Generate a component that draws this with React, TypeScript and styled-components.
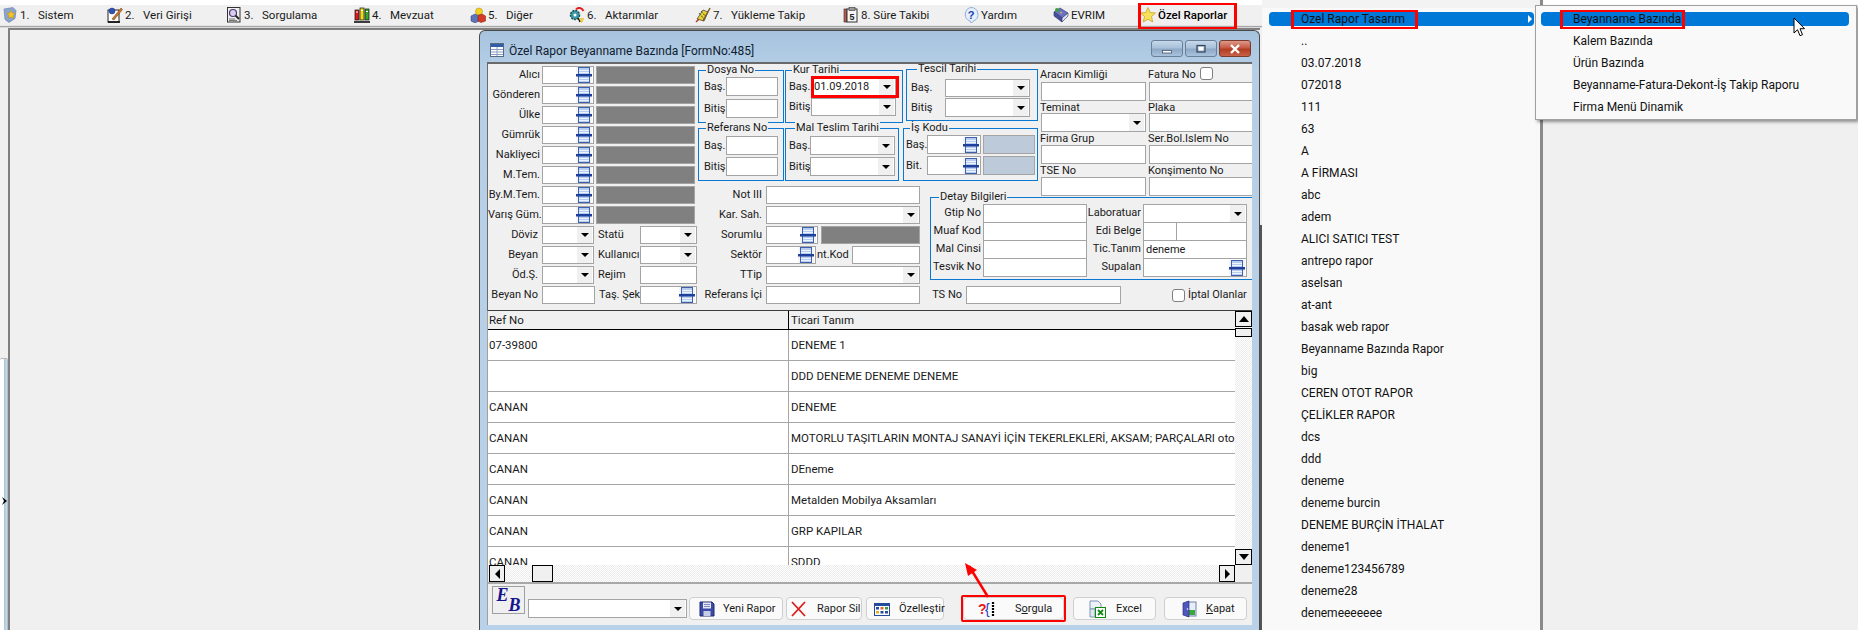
import React from 'react';
import styled, { createGlobalStyle } from 'styled-components';

const UI_FONT = 'Roboto, "Liberation Sans", Arial, sans-serif';

const GlobalStyle = createGlobalStyle`
  html, body {
    margin: 0;
    padding: 0;
    background: #f0f0f0;
  }
  *, *::before, *::after {
    box-sizing: border-box;
  }
`;

const Page = styled.div`
  position: relative;
  width: 1858px;
  height: 630px;
  display: flex;
  overflow: hidden;
  background: #f0f0f0;
  color: #1a1a1a;
  font: 12px/14px ${UI_FONT};
`;

/* ---------- main program side ---------- */

const MainSide = styled.div`
  width: 1262px;
  display: flex;
  flex-direction: column;
`;

const TopGap = styled.div`
  height: 5px;
  background: #fff;
`;

const MenuBar = styled.nav`
  height: 21px;
  padding-left: 2px;
  display: flex;
  align-items: center;
  background: #f0f0f0;
  border-bottom: 1px solid #e4e4e4;
  font-size: 11.5px;
`;

const MenuItem = styled.div<{ $w: number; $marked?: boolean }>`
  position: relative;
  width: ${(p) => p.$w}px;
  display: flex;
  align-items: center;
  flex: none;
  white-space: nowrap;
  ${(p) => p.$marked && `
    color: #000;
    font-weight: 500;
    &::after {
      content: '';
      position: absolute;
      left: -2px;
      top: -4px;
      width: 99px;
      height: 26px;
      border-style: solid;
      border-color: #f00;
      border-width: 2px 3px;
    }
  `}
`;

const MenuIcon = styled.svg`
  width: 16px;
  height: 16px;
  flex: none;
  margin-right: 2px;
`;

const MenuNumber = styled.span`
  width: 18px;
  flex: none;
`;

const MenuRule = styled.div`
  height: 2px;
  background: #a8a8a8;
  border-bottom: 1px solid #d8d8d8;
`;

const Workspace = styled.div`
  flex: 1;
  display: flex;
  min-height: 0;
`;

const LeftRail = styled.div`
  width: 8px;
  flex: none;
  display: flex;
  flex-direction: column;
  padding-top: 330px;
`;

const RailTab = styled.div`
  flex: 1;
  padding: 138px 0 0 2px;
  border-radius: 2px 2px 0 0;
  border-top: 1px solid #b8b8b8;
  background: linear-gradient(90deg, #fff 0 45%, #a9c7d9 55%, #c8dbe6 80%, #9fb4c0 100%);
`;

const RailChevron = styled.svg`
  display: block;
  width: 5px;
  height: 8px;
`;

const MdiArea = styled.div`
  flex: 1;
  padding-left: 469px;
  border-left: 2px solid #808080;
  border-top: 2px solid #808080;
`;

const MdiEdge = styled.div`
  width: 2px;
  flex: none;
  margin-top: 197px;
  background: #555;
`;

/* ---------- report window ---------- */

const Window = styled.section`
  width: 781px;
  height: 600px;
  padding: 0 7px 5px;
  display: flex;
  flex-direction: column;
  border: 1px solid #4a4a4a;
  border-bottom: 0;
  border-radius: 6px 6px 0 0;
  background: linear-gradient(180deg, #a6c3de 0, #b6cfe7 40px, #b9d1e9 100%);
`;

const TitleBar = styled.header`
  height: 31px;
  flex: none;
  display: flex;
  align-items: flex-end;
  padding: 0 1px 4px 3px;
  color: #10202e;
`;

const TitleIcon = styled.svg`
  width: 14px;
  height: 14px;
  flex: none;
  margin: 0 5px 1px 0;
`;

const TitleText = styled.span`
  flex: 1;
`;

const WindowButtons = styled.div`
  display: flex;
  gap: 2px;
  margin-bottom: 1px;
`;

const WindowButton = styled.div<{ $close?: boolean }>`
  width: 32px;
  height: 17px;
  display: flex;
  align-items: center;
  justify-content: center;
  border: 1px solid ${(p) => (p.$close ? '#7a3a2c' : '#6b7f96')};
  border-radius: 3px;
  background: ${(p) => (p.$close
    ? 'linear-gradient(180deg, #dd9a8b 0, #c75a44 45%, #b23c22 55%, #c9614a 100%)'
    : 'linear-gradient(180deg, #c6d8ea 0, #a9c1da 45%, #8ea9c6 55%, #a9c2dc 100%)')};
`;

const ButtonGlyph = styled.svg`
  width: 12px;
  height: 10px;
`;

const FormBody = styled.div`
  height: 248px;
  flex: none;
  padding-top: 1px;
  display: flex;
  overflow: hidden;
  background: #f0f0f0;
  border-top: 2px solid #6a6a6a;
  border-left: 1px solid #6a6a6a;
  font-size: 11px;
`;

const PartyColumn = styled.div`
  width: 210px;
  flex: none;
  padding-top: 1px;
  display: flex;
  flex-direction: column;
  gap: 2px;
`;

const FormRow = styled.div`
  height: 18px;
  display: flex;
  gap: 2px;
`;

const FieldLabel = styled.span<{ $w: number; $left?: boolean; $pad?: number }>`
  width: ${(p) => p.$w}px;
  flex: none;
  white-space: nowrap;
  line-height: 18px;
  text-align: ${(p) => (p.$left ? 'left' : 'right')};
  padding-${(p) => (p.$left ? 'left' : 'right')}: ${(p) => p.$pad ?? 0}px;
`;

const Field = styled.div<{ $w: number; $h?: number; $marked?: boolean; $ml?: number }>`
  position: relative;
  width: ${(p) => p.$w}px;
  height: ${(p) => p.$h ?? 18}px;
  flex: none;
  margin-left: ${(p) => p.$ml ?? 0}px;
  padding-left: 2px;
  display: flex;
  align-items: center;
  background: #fff;
  border: 1px solid #a4a4a4;
  white-space: nowrap;
  ${(p) => p.$marked && `
    &::after {
      content: '';
      position: absolute;
      left: -1px;
      right: -4px;
      top: -3px;
      bottom: -3px;
      border: 3px solid #f00;
    }
  `}
`;

const FieldValue = styled.span`
  flex: 1;
  overflow: hidden;
`;

const DropButton = styled.span`
  width: 15px;
  height: 100%;
  flex: none;
  display: flex;
  align-items: center;
  justify-content: center;
  background: #f0f0f0;
  margin-right: 1px;
  &::before {
    content: '';
    border-left: 4px solid transparent;
    border-right: 4px solid transparent;
    border-top: 4px solid #000;
  }
`;

const LookupGlyph = styled.svg`
  width: 16px;
  height: 16px;
  flex: none;
  margin-right: 1px;
  background: #f4f4f4;
`;

const GrayBox = styled.div<{ $w: number; $h?: number; $tint?: boolean; $ml?: number }>`
  width: ${(p) => p.$w}px;
  height: ${(p) => p.$h ?? 18}px;
  flex: none;
  margin-left: ${(p) => p.$ml ?? 0}px;
  background: ${(p) => (p.$tint ? '#bccad9' : '#808080')};
  border: 1px solid #a4a4a4;
`;

const RightRegion = styled.div`
  flex: 1;
  display: grid;
  grid-template-columns: 222px 10px 110px 212px;
  grid-template-rows: 121px 11px 108px;
`;

const GroupsArea = styled.div`
  grid-column: 1 / 4;
  grid-row: 1;
  padding-top: 5px;
  display: flex;
`;

const GroupColumn = styled.div<{ $w: number; $end?: boolean; $top?: number; $gap: number }>`
  width: ${(p) => p.$w}px;
  flex: none;
  display: flex;
  flex-direction: column;
  align-items: ${(p) => (p.$end ? 'flex-end' : 'flex-start')};
  gap: ${(p) => p.$gap}px;
  margin-top: ${(p) => p.$top ?? 0}px;
`;

const FieldGroup = styled.fieldset<{ $w: number; $h: number; $pl: number; $pt: number; $gap: number }>`
  position: relative;
  width: ${(p) => p.$w}px;
  height: ${(p) => p.$h}px;
  margin: 0;
  padding: ${(p) => p.$pt}px 0 0 ${(p) => p.$pl}px;
  min-width: 0;
  display: flex;
  flex-direction: column;
  gap: ${(p) => p.$gap}px;
  border: 1px solid #0a78d0;
`;

const GroupTitle = styled.span<{ $x: number }>`
  position: absolute;
  left: ${(p) => p.$x}px;
  top: -8px;
  padding: 0 1px;
  background: #f0f0f0;
  white-space: nowrap;
`;

const GroupRow = styled.div`
  display: flex;
  align-items: center;
`;

const GroupLabel = styled.span<{ $w: number }>`
  width: ${(p) => p.$w}px;
  flex: none;
`;

const VehicleGrid = styled.div`
  grid-column: 4;
  grid-row: 1 / 3;
  display: grid;
  grid-template-columns: 108px 104px;
  align-content: start;
`;

const VehicleCell = styled.div`
  display: flex;
  flex-direction: column;
`;

const VehicleLabel = styled.div<{ $h: number; $pt?: number }>`
  height: ${(p) => p.$h}px;
  padding-top: ${(p) => p.$pt ?? 0}px;
  display: flex;
  white-space: nowrap;
`;

const CheckBox = styled.span<{ $ml: number; $mt?: number }>`
  width: 13px;
  height: 13px;
  flex: none;
  margin-left: ${(p) => p.$ml}px;
  margin-top: ${(p) => p.$mt ?? 0}px;
  background: #fff;
  border: 1px solid #7f7f7f;
  border-radius: 3px;
`;

const NotesColumn = styled.div`
  grid-column: 1;
  grid-row: 2 / 4;
  display: flex;
  flex-direction: column;
  gap: 2px;
`;

const NotesRow = styled.div`
  height: 18px;
  display: flex;
`;

const DetailColumn = styled.div`
  grid-column: 3 / 5;
  grid-row: 3;
  display: flex;
  flex-direction: column;
`;

const DetailGrid = styled.div`
  display: grid;
  grid-template-columns: 52px 104px 56px 104px;
  grid-auto-rows: 18px;
`;

const DetailSplit = styled.div`
  display: flex;
`;

const TsRow = styled.div`
  margin-top: 6px;
  height: 18px;
  display: flex;
  align-items: center;
`;

const TsCheckText = styled.span`
  margin-left: 3px;
  white-space: nowrap;
`;

/* ---------- result grid ---------- */

const ResultArea = styled.div`
  height: 272px;
  flex: none;
  display: flex;
  flex-direction: column;
  background: #fff;
  border-top: 1px solid #3c3c3c;
  border-left: 1px solid #a0a0a0;
  font-size: 11.5px;
`;

const ResultMain = styled.div`
  flex: 1;
  min-height: 0;
  display: flex;
`;

const ResultTable = styled.div`
  flex: 1;
  min-width: 0;
  overflow: hidden;
`;

const ResultHeader = styled.div`
  height: 19px;
  display: grid;
  grid-template-columns: 300px 1fr;
  background: #f0f0f0;
  border-bottom: 1px solid #000;
`;

const HeaderCell = styled.div`
  padding-left: 1px;
  line-height: 18px;
  & + & {
    padding-left: 2px;
    border-left: 1px solid #000;
  }
`;

const ResultRow = styled.div`
  height: 31px;
  display: grid;
  grid-template-columns: 300px 1fr;
  background: #fff;
  border-bottom: 1px solid #a6a6a6;
`;

const ResultCell = styled.div`
  padding-left: 1px;
  line-height: 30px;
  white-space: nowrap;
  overflow: hidden;
  & + & {
    padding-left: 2px;
    border-left: 1px solid #a6a6a6;
  }
`;

const Dither = styled.div`
  background-color: #fff;
  background-image: repeating-conic-gradient(#ececec 0 25%, #fff 0 50%);
  background-size: 2px 2px;
`;

const VScroll = styled(Dither)`
  width: 17px;
  flex: none;
  display: flex;
  flex-direction: column;
`;

const ScrollButton = styled.div<{ $dir: 'up' | 'down' | 'left' | 'right' }>`
  width: ${(p) => (p.$dir === 'left' || p.$dir === 'right' ? 16 : 17)}px;
  height: ${(p) => (p.$dir === 'left' || p.$dir === 'right' ? 17 : 16)}px;
  flex: none;
  display: flex;
  align-items: center;
  justify-content: center;
  background: #f0f0f0;
  border: 1px solid #000;
  &::before {
    content: '';
    ${(p) => p.$dir === 'up' && 'border-left: 5px solid transparent; border-right: 5px solid transparent; border-bottom: 6px solid #000;'}
    ${(p) => p.$dir === 'down' && 'border-left: 5px solid transparent; border-right: 5px solid transparent; border-top: 6px solid #000;'}
    ${(p) => p.$dir === 'left' && 'border-top: 5px solid transparent; border-bottom: 5px solid transparent; border-right: 5px solid #000;'}
    ${(p) => p.$dir === 'right' && 'border-top: 5px solid transparent; border-bottom: 5px solid transparent; border-left: 5px solid #000;'}
  }
`;

const VThumb = styled.div`
  height: 9px;
  flex: none;
  margin-top: 1px;
  background: #f0f0f0;
  border: 1px solid #000;
`;

const ScrollFill = styled.div`
  flex: 1;
`;

const HScrollRow = styled.div`
  height: 17px;
  flex: none;
  display: flex;
  background: #f0f0f0;
`;

const HScroll = styled(Dither)`
  flex: 1;
  margin-left: 1px;
  display: flex;
`;

const HThumb = styled.div`
  width: 21px;
  margin-left: 27px;
  background: #f0f0f0;
  border: 1px solid #000;
`;

const ScrollCorner = styled.div`
  width: 17px;
  flex: none;
`;

/* ---------- footer ---------- */

const Footer = styled.footer`
  flex: 1;
  min-height: 0;
  padding: 2px 0 0 4px;
  display: flex;
  background: #f0f0f0;
  border-top: 2px solid #a8a8a8;
  border-left: 1px solid #a0a0a0;
  font-size: 11px;
`;

const EbLogo = styled.div`
  width: 33px;
  height: 28px;
  flex: none;
  padding: 1px 2px;
  display: flex;
  justify-content: center;
  border: 1px solid #a0a0a0;
  font: italic bold 18px/14px "Liberation Serif", serif;
  color: #14148c;
`;

const EbLetter = styled.span<{ $low?: boolean }>`
  align-self: ${(p) => (p.$low ? 'flex-end' : 'flex-start')};
`;

const ToolRow = styled.div`
  margin: 11px 0 0 3px;
  display: flex;
  align-items: flex-start;
`;

const ToolSelect = styled(Field)`
  margin-top: 2px;
  height: 19px;
`;

const ToolButton = styled.button<{ $w: number; $ml: number; $pl: number; $marked?: boolean }>`
  position: relative;
  width: ${(p) => p.$w}px;
  height: 23px;
  flex: none;
  margin: 0 0 0 ${(p) => p.$ml}px;
  padding: 0 0 0 ${(p) => p.$pl}px;
  display: flex;
  align-items: center;
  background: #fafafa;
  border: 1px solid #cfcfcf;
  border-radius: 4px;
  color: #1a1a1a;
  font: inherit;
  white-space: nowrap;
  ${(p) => p.$marked && `
    &::after {
      content: '';
      position: absolute;
      inset: -3px;
      border: 2px solid #f00;
      border-radius: 2px;
    }
  `}
`;

const ToolIcon = styled.span<{ $w: number }>`
  width: ${(p) => p.$w}px;
  height: 18px;
  flex: none;
  display: flex;
  align-items: center;
`;

const ToolGlyph = styled.svg`
  width: 18px;
  height: 18px;
  display: block;
`;

/* ---------- right hand menus ---------- */

const ContextMenu = styled.aside`
  position: relative;
  width: 281px;
  flex: none;
  padding-top: 8px;
  background: #f9f9f9;
  border-right: 3px solid #8a8a8a;
`;

const MenuStrip = styled.div`
  position: absolute;
  left: 0;
  right: 0;
  top: 0;
  height: 8px;
  background: #f3f3f3;
`;

const MenuRow = styled.div`
  height: 22px;
  padding: 4px 6px 4px 7px;
  color: #111;
  white-space: nowrap;
`;

const SubRow = styled(MenuRow)`
  padding: 4px 7px 4px 5px;
`;

const MenuPill = styled.div<{ $active?: boolean }>`
  position: relative;
  height: 14px;
  padding-left: 32px;
  border-radius: 4px;
  background: ${(p) => (p.$active ? '#0078d7' : 'transparent')};
  line-height: 14px;
`;

const MarkedText = styled.span<{ $l: number; $r: number }>`
  position: relative;
  &::after {
    content: '';
    position: absolute;
    left: -${(p) => p.$l}px;
    right: -${(p) => p.$r}px;
    top: -2px;
    bottom: -3px;
    border-style: solid;
    border-color: #f00;
    border-width: 2px 3px;
  }
`;

const MenuCaret = styled.span`
  position: absolute;
  right: 2px;
  top: 3px;
  border-top: 4px solid transparent;
  border-bottom: 4px solid transparent;
  border-left: 4px solid #fff;
`;

const Submenu = styled.div`
  position: absolute;
  left: 273px;
  top: 5px;
  width: 322px;
  height: 115px;
  padding-top: 2px;
  background: #f9f9f9;
  border: 1px solid #a0a0a0;
  box-shadow: 2px 2px 3px rgba(0, 0, 0, 0.4);
`;

const Cursor = styled.svg`
  position: absolute;
  left: 1793px;
  top: 17px;
  width: 12px;
  height: 20px;
`;

const RestArea = styled.div`
  flex: 1;
  display: flex;
  flex-direction: column;
`;

const RedArrow = styled.svg`
  position: absolute;
  left: 955px;
  top: 556px;
  width: 40px;
  height: 46px;
`;

/* ---------- drawings ---------- */

const Lookup = () => (
  <LookupGlyph viewBox="0 0 16 16">
    <rect x="2.5" y="0.5" width="11" height="15" fill="#b7cdf0" stroke="#3f60ad" />
    <path d="M3 3.5h10M3 5.5h10M3 11.5h10M3 13.5h10" stroke="#eef4fc" />
    <rect x="0" y="7" width="16" height="2.5" fill="#1f3f9c" />
  </LookupGlyph>
);

const IconSistem = () => (
  <MenuIcon viewBox="0 0 16 16">
    <path d="M2 2l9-1.500 3 3-1 8-6 4-4-3z" fill="#8aa5cf" stroke="#5f79a8" strokeWidth=".6" />
    <path d="M9 3l1.400 3 3 .4-2.200 2 .6 3-2.800-1.400-2.700 1.400.6-3-2.200-2 3-.4z" fill="#f2c52e" stroke="#b58a10" strokeWidth=".5" />
  </MenuIcon>
);

const IconVeri = () => (
  <MenuIcon viewBox="0 0 16 16">
    <rect x="1" y="3" width="11" height="12" fill="#fff" stroke="#222" />
    <path d="M1 15h12" stroke="#000" strokeWidth="1.5" />
    <circle cx="5" cy="4" r="3" fill="#2c52b8" stroke="#1a2f70" strokeWidth=".5" />
    <path d="M5 12L14 1l1.500 1.500L7 13z" fill="#c9772c" stroke="#6b3a10" strokeWidth=".5" />
  </MenuIcon>
);

const IconSorgu = () => (
  <MenuIcon viewBox="0 0 16 16">
    <rect x="1.5" y="0.5" width="12.5" height="14.5" fill="#eee" stroke="#333" />
    <circle cx="7" cy="6" r="3.5" fill="#d9cdea" stroke="#4a3a78" strokeWidth="1.2" />
    <path d="M9.500 8.500l3.500 3.500" stroke="#222" strokeWidth="1.8" />
    <path d="M3 12h6M3 13.500h8" stroke="#777" />
  </MenuIcon>
);

const IconMevzuat = () => (
  <MenuIcon viewBox="0 0 16 16">
    <rect x="1" y="3" width="4" height="10" fill="#d81c1c" stroke="#111" strokeWidth=".7" />
    <rect x="6" y="1" width="4" height="12" fill="#eddc1e" stroke="#111" strokeWidth=".7" />
    <rect x="11" y="2" width="4" height="11" fill="#3ba52d" stroke="#111" strokeWidth=".7" />
    <path d="M2 5h2M7 3.500h2M12 4.500h2" stroke="#fff" />
    <path d="M0 15h16" stroke="#000" strokeWidth="1.5" />
  </MenuIcon>
);

const IconDiger = () => (
  <MenuIcon viewBox="0 0 16 16">
    <circle cx="9" cy="4.5" r="3.5" fill="#f4d020" stroke="#a88a00" strokeWidth=".5" />
    <path d="M1 9l4-2 4 2v5l-4 2-4-2z" fill="#5d74b8" stroke="#2c3a70" strokeWidth=".5" />
    <path d="M8 8.500l4-1.500 3.500 2v5L11 15.500 8 14z" fill="#d63a24" stroke="#701808" strokeWidth=".5" />
  </MenuIcon>
);

const IconAktarim = () => (
  <MenuIcon viewBox="0 0 16 16">
    <circle cx="6" cy="8" r="4.5" fill="#3a9aa6" stroke="#1d4f58" strokeDasharray="2 1" strokeWidth="1.5" />
    <circle cx="6" cy="8" r="1.5" fill="#fff" />
    <path d="M7 2.500C9 0 13 .5 14.500 4" fill="none" stroke="#e02020" strokeWidth="2" />
    <path d="M10 12h5M11 14h3M12 16h1" stroke="#e8c21c" strokeWidth="1.5" />
    <path d="M9 11l2 4" stroke="#111" strokeWidth="1.2" />
  </MenuIcon>
);

const IconYukleme = () => (
  <MenuIcon viewBox="0 0 16 16">
    <path d="M2 12L8 3l5 2-4 9z" fill="#e6d435" stroke="#333" strokeWidth=".7" />
    <path d="M4 6l5 6M6 4l5 6" stroke="#222" strokeDasharray="1 1" />
    <path d="M8 14L15 1" stroke="#7a5a2a" strokeWidth="1.5" />
    <path d="M1 15l3-3" stroke="#b03a20" strokeWidth="1.5" />
  </MenuIcon>
);

const IconSure = () => (
  <MenuIcon viewBox="0 0 16 16">
    <rect x="1" y="2" width="3" height="13" fill="#b8564a" stroke="#333" strokeWidth=".6" />
    <rect x="4" y="2" width="10" height="13" fill="#f6f6f6" stroke="#333" />
    <rect x="6" y="0.5" width="6" height="3" fill="#999" stroke="#333" strokeWidth=".6" />
    <text x="9" y="13" textAnchor="middle" fontSize="9" fontWeight="700" fontFamily="Liberation Sans" fill="#222">5</text>
  </MenuIcon>
);

const IconYardim = () => (
  <MenuIcon viewBox="0 0 16 16">
    <path d="M8 .5a7 7 0 0 1 3 13.300L8 16l-1-2A7 7 0 0 1 8 .5z" fill="#e6effa" stroke="#8fb0d8" />
    <text x="8" y="11.5" textAnchor="middle" fontSize="11" fontWeight="700" fontFamily="Liberation Sans" fill="#1a3fb0">?</text>
  </MenuIcon>
);

const IconEvrim = () => (
  <MenuIcon viewBox="0 0 16 16">
    <path d="M1 5l6-4 8 5-6 5z" fill="#6a72c0" stroke="#2c3070" strokeWidth=".6" />
    <path d="M1 5l8 6v4L1 9z" fill="#474f9c" stroke="#2c3070" strokeWidth=".6" />
    <path d="M9 11l6-5v3l-6 6z" fill="#dfe0f2" stroke="#2c3070" strokeWidth=".6" />
    <circle cx="4" cy="3" r="2" fill="#3aa03a" />
    <path d="M8 4.500l1 1.200-1 1-1-1z" fill="#e8c840" />
  </MenuIcon>
);

const IconStar = () => (
  <MenuIcon viewBox="0 0 16 16">
    <path d="M8 .5l2.200 5 5.300.5-4 3.500 1.200 5.500L8 12.200 3.300 15l1.200-5.500-4-3.500 5.300-.5z" fill="#f6e25a" stroke="#c9a321" strokeWidth=".8" />
  </MenuIcon>
);

const IconSave = () => (
  <ToolGlyph viewBox="0 0 18 18">
    <path d="M2 2h12l2 2v12H2z" fill="#3b4ba6" stroke="#1e2a70" />
    <rect x="5" y="2.5" width="8" height="6" fill="#e8e8f4" />
    <path d="M6 4.500h6M6 6.500h6" stroke="#8088c0" />
    <rect x="5.5" y="11" width="7" height="5" fill="#c8cce4" />
  </ToolGlyph>
);

const IconCross = () => (
  <ToolGlyph viewBox="0 0 18 18">
    <path d="M2 2l13 14M15 2L2 16" stroke="#e01b1b" strokeWidth="1.8" fill="none" />
  </ToolGlyph>
);

const IconTable = () => (
  <ToolGlyph viewBox="0 0 18 18">
    <rect x="1.5" y="3.5" width="15" height="12" fill="#fff" stroke="#244a9c" />
    <rect x="1.5" y="3.5" width="15" height="2.5" fill="#244a9c" />
    <rect x="3" y="7" width="3" height="2.5" fill="#244a9c" />
    <rect x="7.5" y="7" width="3" height="2.5" fill="#e0653a" />
    <rect x="12" y="7" width="3" height="2.5" fill="#3a9a3a" />
    <rect x="3" y="11" width="3" height="2.5" fill="#e8b020" />
    <rect x="7.5" y="11" width="3" height="2.5" fill="#244a9c" />
    <rect x="12" y="11" width="3" height="2.5" fill="#244a9c" />
  </ToolGlyph>
);

const IconQuery = () => (
  <ToolGlyph viewBox="0 0 18 18">
    <text x="0" y="14" fontSize="14" fontWeight="700" fontFamily="Liberation Sans" fill="#e01818">?</text>
    <text x="7" y="14" fontSize="14" fontFamily="Liberation Sans" fill="#1c3fc0">{'{'}</text>
    <path d="M15 2v14" stroke="#000" strokeWidth="2.2" strokeDasharray="2 1" />
  </ToolGlyph>
);

const IconExcel = () => (
  <ToolGlyph viewBox="0 0 18 18">
    <path d="M1 1h8l3 3v5H1z" fill="#eef2f8" stroke="#7d95b8" />
    <path d="M1 9v8h5V9z" fill="#dfe7f2" stroke="#7d95b8" />
    <rect x="6.5" y="7.5" width="10" height="10" fill="#fff" stroke="#128a12" />
    <path d="M9 10l5 5M14 10l-5 5" stroke="#128a12" strokeWidth="1.8" />
  </ToolGlyph>
);

const IconDoor = () => (
  <ToolGlyph viewBox="0 0 18 18">
    <rect x="6" y="2" width="9" height="14" fill="#e8eef6" stroke="#7080b0" />
    <rect x="7" y="10" width="7" height="5" fill="#3aa83a" />
    <path d="M2 3l6-2v16l-6-2z" fill="#5058c0" stroke="#2a2e80" strokeWidth=".7" />
    <circle cx="6.5" cy="9" r=".8" fill="#fff" />
  </ToolGlyph>
);

/* ---------- data ---------- */

const partyRows = ['Alıcı', 'Gönderen', 'Ülke', 'Gümrük', 'Nakliyeci', 'M.Tem.', 'By.M.Tem.', 'Varış Güm.'];

const resultRows = [
  ['07-39800', 'DENEME 1'],
  ['', 'DDD DENEME DENEME DENEME'],
  ['CANAN', 'DENEME'],
  ['CANAN', 'MOTORLU TAŞITLARIN MONTAJ SANAYİ İÇİN TEKERLEKLERİ, AKSAM; PARÇALARI oto'],
  ['CANAN', 'DEneme'],
  ['CANAN', 'Metalden Mobilya Aksamları'],
  ['CANAN', 'GRP KAPILAR'],
  ['CANAN', 'SDDD'],
];

const reportNames = [
  '..', '03.07.2018', '072018', '111', '63', 'A', 'A FİRMASI', 'abc', 'adem', 'ALICI SATICI TEST',
  'antrepo rapor', 'aselsan', 'at-ant', 'basak web rapor', 'Beyanname Bazında Rapor', 'big',
  'CEREN OTOT RAPOR', 'ÇELİKLER RAPOR', 'dcs', 'ddd', 'deneme', 'deneme burcin', 'DENEME BURÇİN İTHALAT',
  'deneme1', 'deneme123456789', 'deneme28', 'denemeeeeeee',
];

const subItems = ['Kalem Bazında', 'Ürün Bazında', 'Beyanname-Fatura-Dekont-İş Takip Raporu', 'Firma Menü Dinamik'];

const App: React.FC = () => (
  <Page>
    <GlobalStyle />
    <MainSide>
      <TopGap />
      <MenuBar>
        <MenuItem $w={105}><IconSistem /><MenuNumber>1.</MenuNumber>Sistem</MenuItem>
        <MenuItem $w={119}><IconVeri /><MenuNumber>2.</MenuNumber>Veri Girişi</MenuItem>
        <MenuItem $w={128}><IconSorgu /><MenuNumber>3.</MenuNumber>Sorgulama</MenuItem>
        <MenuItem $w={116}><IconMevzuat /><MenuNumber>4.</MenuNumber>Mevzuat</MenuItem>
        <MenuItem $w={99}><IconDiger /><MenuNumber>5.</MenuNumber>Diğer</MenuItem>
        <MenuItem $w={126}><IconAktarim /><MenuNumber>6.</MenuNumber>Aktarımlar</MenuItem>
        <MenuItem $w={148}><IconYukleme /><MenuNumber>7.</MenuNumber>Yükleme Takip</MenuItem>
        <MenuItem $w={120}><IconSure />8. Süre Takibi</MenuItem>
        <MenuItem $w={90}><IconYardim />Yardım</MenuItem>
        <MenuItem $w={87}><IconEvrim />EVRIM</MenuItem>
        <MenuItem $w={100} $marked><IconStar />Özel Raporlar</MenuItem>
      </MenuBar>
      <MenuRule />
      <Workspace>
        <LeftRail>
          <RailTab>
            <RailChevron viewBox="0 0 5 8"><path d="M0 0l5 4-5 4 2-4z" fill="#000" /></RailChevron>
          </RailTab>
        </LeftRail>
        <MdiArea>
          <Window>
            <TitleBar>
              <TitleIcon viewBox="0 0 14 14">
                <rect x=".5" y=".5" width="13" height="13" fill="#fff" stroke="#5a6a80" />
                <rect x="1" y="1" width="12" height="3" fill="#2f5fa8" />
                <path d="M1 6.500h12M1 9h12M1 11.500h12M7 4v9" stroke="#8aa0c0" />
              </TitleIcon>
              <TitleText>Özel Rapor Beyanname Bazında [FormNo:485]</TitleText>
              <WindowButtons>
                <WindowButton>
                  <ButtonGlyph viewBox="0 0 12 10"><rect x="1.5" y="6.5" width="9" height="2.5" fill="#fff" stroke="#44566c" strokeWidth=".8" /></ButtonGlyph>
                </WindowButton>
                <WindowButton>
                  <ButtonGlyph viewBox="0 0 12 10"><rect x="2" y="1.5" width="8" height="6.5" fill="none" stroke="#33465c" strokeWidth="1.2" /><rect x="3.5" y="3" width="5" height="3.5" fill="#fff" /></ButtonGlyph>
                </WindowButton>
                <WindowButton $close>
                  <ButtonGlyph viewBox="0 0 12 10"><path d="M2 1l8 8M10 1L2 9" stroke="#fff" strokeWidth="2.4" /></ButtonGlyph>
                </WindowButton>
              </WindowButtons>
            </TitleBar>

            <FormBody>
              <PartyColumn>
                {partyRows.map((label) => (
                  <FormRow key={label}>
                    <FieldLabel $w={52}>{label}</FieldLabel>
                    <Field $w={52}><FieldValue /><Lookup /></Field>
                    <GrayBox $w={99} />
                  </FormRow>
                ))}
                <FormRow>
                  <FieldLabel $w={52} $pad={2}>Döviz</FieldLabel>
                  <Field $w={52}><FieldValue /><DropButton /></Field>
                  <FieldLabel $w={42} $left $pad={2}>Statü</FieldLabel>
                  <Field $w={57}><FieldValue /><DropButton /></Field>
                </FormRow>
                <FormRow>
                  <FieldLabel $w={52} $pad={2}>Beyan</FieldLabel>
                  <Field $w={52}><FieldValue /><DropButton /></Field>
                  <FieldLabel $w={42} $left $pad={2}>Kullanıcı</FieldLabel>
                  <Field $w={57}><FieldValue /><DropButton /></Field>
                </FormRow>
                <FormRow>
                  <FieldLabel $w={52} $pad={2}>Öd.Ş.</FieldLabel>
                  <Field $w={52}><FieldValue /><DropButton /></Field>
                  <FieldLabel $w={42} $left $pad={2}>Rejim</FieldLabel>
                  <Field $w={57} />
                </FormRow>
                <FormRow>
                  <FieldLabel $w={52} $pad={2}>Beyan No</FieldLabel>
                  <Field $w={53} />
                  <FieldLabel $w={41} $left $pad={2}>Taş. Şek</FieldLabel>
                  <Field $w={57}><FieldValue /><Lookup /></Field>
                </FormRow>
              </PartyColumn>

              <RightRegion>
                <GroupsArea>
                  <GroupColumn $w={87} $gap={5}>
                    <FieldGroup $w={86} $h={53} $pl={5} $pt={6} $gap={3}>
                      <GroupTitle $x={7}>Dosya No</GroupTitle>
                      <GroupRow><GroupLabel $w={22}>Baş.</GroupLabel><Field $w={52} $h={19} /></GroupRow>
                      <GroupRow><GroupLabel $w={22}>Bitiş</GroupLabel><Field $w={52} $h={19} /></GroupRow>
                    </FieldGroup>
                    <FieldGroup $w={86} $h={53} $pl={5} $pt={7} $gap={2}>
                      <GroupTitle $x={7}>Referans No</GroupTitle>
                      <GroupRow><GroupLabel $w={22}>Baş.</GroupLabel><Field $w={52} $h={19} /></GroupRow>
                      <GroupRow><GroupLabel $w={22}>Bitiş</GroupLabel><Field $w={52} $h={19} /></GroupRow>
                    </FieldGroup>
                  </GroupColumn>
                  <GroupColumn $w={118} $gap={5}>
                    <FieldGroup $w={118} $h={53} $pl={3} $pt={7} $gap={2}>
                      <GroupTitle $x={6}>Kur Tarihi</GroupTitle>
                      <GroupRow><GroupLabel $w={22}>Baş.</GroupLabel><Field $w={85} $marked><FieldValue>01.09.2018</FieldValue><DropButton /></Field></GroupRow>
                      <GroupRow><GroupLabel $w={22}>Bitiş</GroupLabel><Field $w={85}><FieldValue /><DropButton /></Field></GroupRow>
                    </FieldGroup>
                    <FieldGroup $w={114} $h={53} $pl={3} $pt={7} $gap={2}>
                      <GroupTitle $x={9}>Mal Teslim Tarihi</GroupTitle>
                      <GroupRow><GroupLabel $w={21}>Baş.</GroupLabel><Field $w={85} $h={19}><FieldValue /><DropButton /></Field></GroupRow>
                      <GroupRow><GroupLabel $w={21}>Bitiş</GroupLabel><Field $w={85} $h={19}><FieldValue /><DropButton /></Field></GroupRow>
                    </FieldGroup>
                  </GroupColumn>
                  <GroupColumn $w={135} $gap={7} $end $top={-1}>
                    <FieldGroup $w={132} $h={52} $pl={4} $pt={9} $gap={1}>
                      <GroupTitle $x={10}>Tescil Tarihi</GroupTitle>
                      <GroupRow><GroupLabel $w={34}>Baş.</GroupLabel><Field $w={85}><FieldValue /><DropButton /></Field></GroupRow>
                      <GroupRow><GroupLabel $w={34}>Bitiş</GroupLabel><Field $w={85} $h={19}><FieldValue /><DropButton /></Field></GroupRow>
                    </FieldGroup>
                    <FieldGroup $w={135} $h={53} $pl={2} $pt={6} $gap={2}>
                      <GroupTitle $x={6}>İş Kodu</GroupTitle>
                      <GroupRow><GroupLabel $w={21}>Baş.</GroupLabel><Field $w={54} $h={19}><FieldValue /><Lookup /></Field><GrayBox $w={52} $h={19} $tint $ml={2} /></GroupRow>
                      <GroupRow><GroupLabel $w={21}>Bit.</GroupLabel><Field $w={54} $h={19}><FieldValue /><Lookup /></Field><GrayBox $w={52} $h={19} $tint $ml={2} /></GroupRow>
                    </FieldGroup>
                  </GroupColumn>
                </GroupsArea>

                <VehicleGrid>
                  <VehicleCell>
                    <VehicleLabel $h={17} $pt={3}>Aracın Kimliği</VehicleLabel>
                    <Field $w={105} $h={19} $ml={1} />
                  </VehicleCell>
                  <VehicleCell>
                    <VehicleLabel $h={17} $pt={3}>Fatura No<CheckBox $ml={4} $mt={-1} /></VehicleLabel>
                    <Field $w={104} $h={19} $ml={1} />
                  </VehicleCell>
                  <VehicleCell>
                    <VehicleLabel $h={12}>Teminat</VehicleLabel>
                    <Field $w={105} $h={19} $ml={1}><FieldValue /><DropButton /></Field>
                  </VehicleCell>
                  <VehicleCell>
                    <VehicleLabel $h={12}>Plaka</VehicleLabel>
                    <Field $w={104} $h={19} $ml={1} />
                  </VehicleCell>
                  <VehicleCell>
                    <VehicleLabel $h={13}>Firma Grup</VehicleLabel>
                    <Field $w={105} $h={19} $ml={1} />
                  </VehicleCell>
                  <VehicleCell>
                    <VehicleLabel $h={13}>Ser.Bol.Islem No</VehicleLabel>
                    <Field $w={104} $h={19} $ml={1} />
                  </VehicleCell>
                  <VehicleCell>
                    <VehicleLabel $h={13}>TSE No</VehicleLabel>
                    <Field $w={105} $h={19} $ml={1} />
                  </VehicleCell>
                  <VehicleCell>
                    <VehicleLabel $h={13}>Konşimento No</VehicleLabel>
                    <Field $w={104} $h={19} $ml={1} />
                  </VehicleCell>
                </VehicleGrid>

                <NotesColumn>
                  <NotesRow><FieldLabel $w={64}>Not III</FieldLabel><Field $w={154} $ml={4} /></NotesRow>
                  <NotesRow><FieldLabel $w={64}>Kar. Sah.</FieldLabel><Field $w={154} $ml={4}><FieldValue /><DropButton /></Field></NotesRow>
                  <NotesRow>
                    <FieldLabel $w={64}>Sorumlu</FieldLabel>
                    <Field $w={52} $ml={4}><FieldValue /><Lookup /></Field>
                    <GrayBox $w={99} $ml={3} />
                  </NotesRow>
                  <NotesRow>
                    <FieldLabel $w={64}>Sektör</FieldLabel>
                    <Field $w={50} $ml={4}><FieldValue /><Lookup /></Field>
                    <FieldLabel $w={36} $left $pad={1}>nt.Kod</FieldLabel>
                    <Field $w={68} />
                  </NotesRow>
                  <NotesRow><FieldLabel $w={64}>TTip</FieldLabel><Field $w={154} $ml={4}><FieldValue /><DropButton /></Field></NotesRow>
                  <NotesRow><FieldLabel $w={64}>Referans İçi</FieldLabel><Field $w={154} $ml={4} /></NotesRow>
                </NotesColumn>

                <DetailColumn>
                  <FieldGroup $w={330} $h={83} $pl={0} $pt={6} $gap={0}>
                    <GroupTitle $x={8}>Detay Bilgileri</GroupTitle>
                    <DetailGrid>
                      <FieldLabel $w={52} $pad={2}>Gtip No</FieldLabel>
                      <Field $w={104} $h={19} />
                      <FieldLabel $w={56} $pad={2}>Laboratuar</FieldLabel>
                      <Field $w={104} $h={19}><FieldValue /><DropButton /></Field>
                      <FieldLabel $w={52} $pad={2}>Muaf Kod</FieldLabel>
                      <Field $w={104} $h={19} />
                      <FieldLabel $w={56} $pad={2}>Edi Belge</FieldLabel>
                      <DetailSplit><Field $w={34} $h={19} /><Field $w={71} $h={19} $ml={-1} /></DetailSplit>
                      <FieldLabel $w={52} $pad={2}>Mal Cinsi</FieldLabel>
                      <Field $w={104} $h={19} />
                      <FieldLabel $w={56} $pad={2}>Tic.Tanım</FieldLabel>
                      <Field $w={104} $h={19}><FieldValue>deneme</FieldValue></Field>
                      <FieldLabel $w={52} $pad={2}>Tesvik No</FieldLabel>
                      <Field $w={104} $h={19} />
                      <FieldLabel $w={56} $pad={2}>Supalan</FieldLabel>
                      <Field $w={104} $h={19}><FieldValue /><Lookup /></Field>
                    </DetailGrid>
                  </FieldGroup>
                  <TsRow>
                    <FieldLabel $w={34} $pad={2}>TS No</FieldLabel>
                    <Field $w={155} $ml={2} />
                    <CheckBox $ml={51} />
                    <TsCheckText>İptal Olanlar</TsCheckText>
                  </TsRow>
                </DetailColumn>
              </RightRegion>
            </FormBody>

            <ResultArea>
              <ResultMain>
                <ResultTable>
                  <ResultHeader>
                    <HeaderCell>Ref No</HeaderCell>
                    <HeaderCell>Ticari Tanım</HeaderCell>
                  </ResultHeader>
                  {resultRows.map((row) => (
                    <ResultRow key={row[1]}>
                      <ResultCell>{row[0]}</ResultCell>
                      <ResultCell>{row[1]}</ResultCell>
                    </ResultRow>
                  ))}
                </ResultTable>
                <VScroll>
                  <ScrollButton $dir="up" />
                  <VThumb />
                  <ScrollFill />
                  <ScrollButton $dir="down" />
                </VScroll>
              </ResultMain>
              <HScrollRow>
                <HScroll>
                  <ScrollButton $dir="left" />
                  <HThumb />
                  <ScrollFill />
                  <ScrollButton $dir="right" />
                </HScroll>
                <ScrollCorner />
              </HScrollRow>
            </ResultArea>

            <Footer>
              <EbLogo><EbLetter>E</EbLetter><EbLetter $low>B</EbLetter></EbLogo>
              <ToolRow>
                <ToolSelect $w={159}><FieldValue /><DropButton /></ToolSelect>
                <ToolButton $w={94} $ml={2} $pl={8}><ToolIcon $w={25}><IconSave /></ToolIcon>Yeni Rapor</ToolButton>
                <ToolButton $w={76} $ml={3} $pl={3}><ToolIcon $w={27}><IconCross /></ToolIcon>Rapor Sil</ToolButton>
                <ToolButton $w={78} $ml={4} $pl={6}><ToolIcon $w={26}><IconTable /></ToolIcon>Özelleştir</ToolButton>
                <ToolButton $w={101} $ml={19} $pl={14} $marked><ToolIcon $w={37}><IconQuery /></ToolIcon><span>S<u>o</u>rgula</span></ToolButton>
                <ToolButton $w={83} $ml={9} $pl={15}><ToolIcon $w={27}><IconExcel /></ToolIcon>Excel</ToolButton>
                <ToolButton $w={83} $ml={8} $pl={16}><ToolIcon $w={25}><IconDoor /></ToolIcon><span><u>K</u>apat</span></ToolButton>
              </ToolRow>
            </Footer>
          </Window>
        </MdiArea>
        <MdiEdge />
      </Workspace>
    </MainSide>

    <ContextMenu>
      <MenuStrip />
      <MenuRow>
        <MenuPill $active>
          <MarkedText $l={10} $r={13}>Ozel Rapor Tasarım</MarkedText>
          <MenuCaret />
        </MenuPill>
      </MenuRow>
      {reportNames.map((name) => (
        <MenuRow key={name}>
          <MenuPill>{name}</MenuPill>
        </MenuRow>
      ))}
      <Submenu>
        <SubRow>
          <MenuPill $active><MarkedText $l={13} $r={4}>Beyanname Bazında</MarkedText></MenuPill>
        </SubRow>
        {subItems.map((item) => (
          <SubRow key={item}>
            <MenuPill>{item}</MenuPill>
          </SubRow>
        ))}
      </Submenu>
    </ContextMenu>

    <RestArea>
      <TopGap />
    </RestArea>

    <Cursor viewBox="0 0 12 20">
      <path d="M1 1v15l3.500-3.300 2.500 6 2.500-1-2.500-6h4.500z" fill="#fff" stroke="#000" strokeWidth="1" />
    </Cursor>

    <RedArrow viewBox="0 0 40 46">
      <path d="M33 41L14 10" stroke="#f00" strokeWidth="2.5" fill="none" />
      <path d="M10 7l12 7-9 6z" fill="#f00" />
    </RedArrow>
  </Page>
);

export default App;
